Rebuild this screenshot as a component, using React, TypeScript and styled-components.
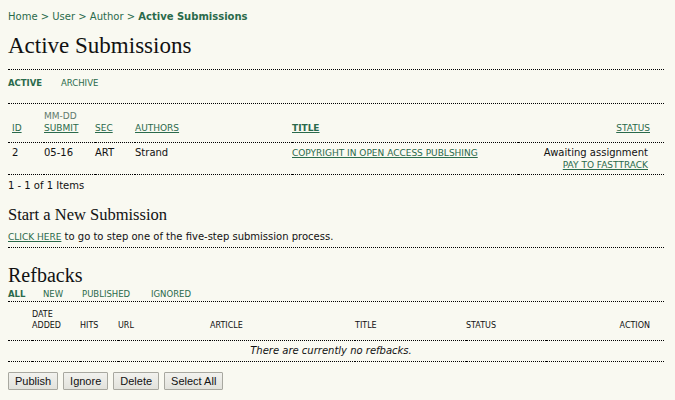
import React from "react";
import styled, { createGlobalStyle } from "styled-components";

const Global = createGlobalStyle`
  html, body { margin: 0; padding: 0; background: #f9f9f1; }
  body { padding: 8px; font-family: "DejaVu Sans", Verdana, sans-serif; color: #111; }
`;

const LINK = "#2a6a4b";

const Page = styled.div`
  width: 656px;
  font-size: 10px;
`;

const Breadcrumb = styled.div`
  font-size: 10px;
  line-height: 13px;
  padding-top: 2px;
  color: ${LINK};
  a { color: ${LINK}; text-decoration: none; }
  b { font-weight: bold; }
`;

const Title = styled.h1<{ $size: number; $lh: number }>`
  font-family: "Liberation Serif", "Times New Roman", serif;
  font-weight: normal;
  font-size: ${(p) => p.$size}px;
  line-height: ${(p) => p.$lh}px;
  margin: 0;
  color: #111;
`;

const Rule = styled.div`
  border-top: 1px dotted #000;
`;

const Menu = styled.div<{ $pad: string }>`
  display: flex;
  padding: ${(p) => p.$pad};
  font-size: 8.5px;
  line-height: 11px;
`;

const MenuItem = styled.a<{ $active?: boolean; $w: number }>`
  width: ${(p) => p.$w}px;
  color: ${LINK};
  text-decoration: none;
  font-weight: ${(p) => (p.$active ? "bold" : "normal")};
`;

const Table = styled.table`
  width: 100%;
  border-collapse: collapse;
  td { padding: 0; vertical-align: bottom; }
`;

const HeadCell = styled.td<{ $w?: number; $right?: boolean }>`
  width: ${(p) => (p.$w ? `${p.$w}px` : "auto")};
  text-align: ${(p) => (p.$right ? "right" : "left")};
  font-size: 9px;
  line-height: 12px;
  color: #5f7a6c;
  a { color: ${LINK}; text-decoration: underline; }
`;

const Cell = styled.td<{ $right?: boolean }>`
  text-align: ${(p) => (p.$right ? "right" : "left")};
  font-size: 10px;
  line-height: 13px;
  a { color: ${LINK}; text-decoration: underline; font-size: 9px; }
`;

const StatusLink = styled.a`
  display: block;
  line-height: 12px;
`;

const HeadRow = styled.tr<{ $h: number; $pb: number }>`
  height: ${(p) => p.$h}px;
  border-bottom: 1px dotted #000;
  td { padding-bottom: ${(p) => p.$pb}px; }
`;

const BodyRow = styled.tr`
  border-bottom: 1px dotted #000;
  td { vertical-align: top; padding-top: 3px; padding-bottom: 3px; }
`;

const Indent = styled.td<{ $w: number }>`
  width: ${(p) => p.$w}px;
`;

const Count = styled.div`
  padding-top: 4px;
  font-size: 10px;
  line-height: 14px;
`;

const Section = styled.div<{ $top: number }>`
  padding-top: ${(p) => p.$top}px;
`;

const Para = styled.p`
  margin: 5px 0 3px;
  font-size: 10px;
  line-height: 13px;
  a { color: ${LINK}; text-decoration: underline; font-size: 9px; }
`;

const RefHead = styled.td<{ $w?: number; $right?: boolean }>`
  width: ${(p) => (p.$w ? `${p.$w}px` : "auto")};
  text-align: ${(p) => (p.$right ? "right" : "left")};
  font-size: 8px;
  line-height: 11px;
  color: #111;
`;

const Empty = styled.td`
  text-align: center;
  font-style: italic;
  font-size: 10px;
  line-height: 13px;
  padding: 3px 10px 4px 0 !important;
`;

const EmptyRow = styled.tr`
  border-bottom: 1px dotted #000;
`;

const Buttons = styled.div`
  display: flex;
  gap: 5px;
  padding-top: 10px;
`;

const Button = styled.button`
  font-family: "Liberation Sans", Arial, sans-serif;
  font-size: 11px;
  height: 18px;
  padding: 0 6px;
  background: linear-gradient(#f2f2ee, #e2e2dc);
  border: 1px solid #a8a8a0;
  border-radius: 1px;
  color: #111;
`;

export default function App() {
  return (
    <>
      <Global />
      <Page>
        <Breadcrumb>
          <a>Home</a> &gt; <a>User</a> &gt; <a>Author</a> &gt; <b>Active Submissions</b>
        </Breadcrumb>
        <Section $top={9}>
          <Title $size={23} $lh={27}>Active Submissions</Title>
        </Section>
        <Section $top={10}>
          <Rule />
        </Section>
        <Menu $pad="8px 0 14px 0">
          <MenuItem $active $w={53}>ACTIVE</MenuItem>
          <MenuItem $w={60}>ARCHIVE</MenuItem>
        </Menu>
        <Rule />
        <Table>
          <tbody>
            <HeadRow $h={38} $pb={8}>
              <HeadCell $w={32} style={{ paddingLeft: 4 }}><a>ID</a></HeadCell>
              <HeadCell $w={51}>MM-DD<br /><a>SUBMIT</a></HeadCell>
              <HeadCell $w={40}><a>SEC</a></HeadCell>
              <HeadCell $w={157}><a>AUTHORS</a></HeadCell>
              <HeadCell><a><b>TITLE</b></a></HeadCell>
              <HeadCell $right style={{ paddingRight: 14 }}><a>STATUS</a></HeadCell>
            </HeadRow>
            <BodyRow>
              <Cell style={{ paddingLeft: 4 }}>2</Cell>
              <Cell>05-16</Cell>
              <Cell>ART</Cell>
              <Cell>Strand</Cell>
              <Cell><a>COPYRIGHT IN OPEN ACCESS PUBLSHING</a></Cell>
              <Cell $right style={{ paddingRight: 16 }}>
                Awaiting assignment<StatusLink>PAY TO FASTTRACK</StatusLink>
              </Cell>
            </BodyRow>
          </tbody>
        </Table>
        <Count>1 - 1 of 1 Items</Count>
        <Section $top={12}>
          <Title $size={16.5} $lh={20}>Start a New Submission</Title>
        </Section>
        <Para><a>CLICK HERE</a> to go to step one of the five-step submission process.</Para>
        <Rule />
        <Section $top={15}>
          <Title $size={20} $lh={24}>Refbacks</Title>
        </Section>
        <Menu $pad="2px 0 1px 0">
          <MenuItem $active $w={35}>ALL</MenuItem>
          <MenuItem $w={39}>NEW</MenuItem>
          <MenuItem $w={69}>PUBLISHED</MenuItem>
          <MenuItem $w={60}>IGNORED</MenuItem>
        </Menu>
        <Rule />
        <Table>
          <tbody>
            <HeadRow $h={39} $pb={9}>
              <Indent $w={24} />
              <RefHead $w={48}>DATE<br />ADDED</RefHead>
              <RefHead $w={38}>HITS</RefHead>
              <RefHead $w={92}>URL</RefHead>
              <RefHead $w={145}>ARTICLE</RefHead>
              <RefHead $w={111}>TITLE</RefHead>
              <RefHead>STATUS</RefHead>
              <RefHead $right style={{ paddingRight: 14 }}>ACTION</RefHead>
            </HeadRow>
            <EmptyRow>
              <Empty colSpan={8}>There are currently no refbacks.</Empty>
            </EmptyRow>
          </tbody>
        </Table>
        <Buttons>
          <Button>Publish</Button>
          <Button>Ignore</Button>
          <Button>Delete</Button>
          <Button>Select All</Button>
        </Buttons>
      </Page>
    </>
  );
}
